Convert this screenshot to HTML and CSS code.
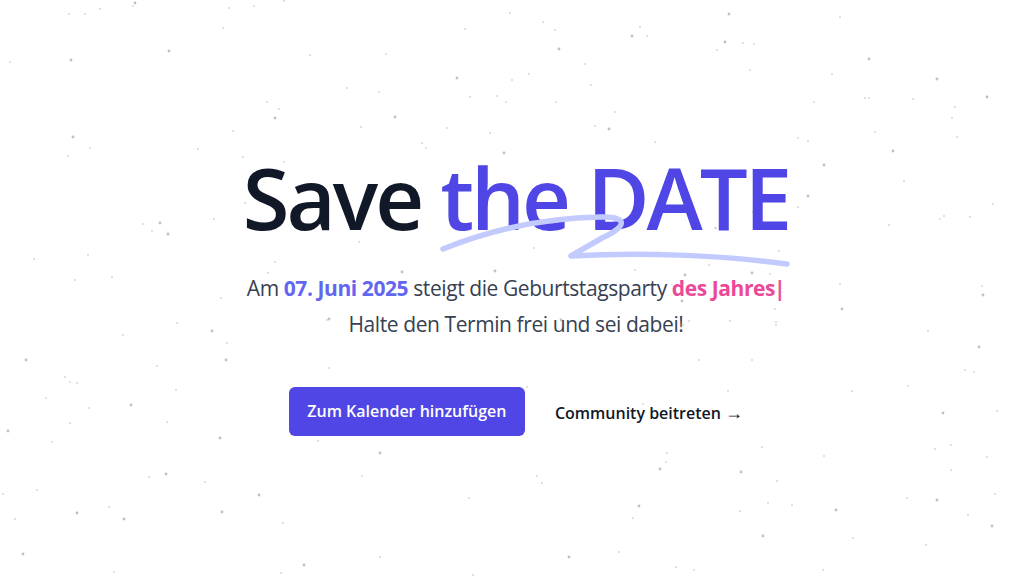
FILE: index.html
```html
<!DOCTYPE html>
<html lang="de">
<head>
<meta charset="utf-8">
<title>Save the DATE</title>
<link rel="stylesheet" href="styles.css">
</head>
<body>
<div class="page">
  <svg class="dots" viewBox="0 0 1024 576" width="1024" height="576" aria-hidden="true">
    <g class="big">
      <circle cx="169" cy="51" r="1.4"/><circle cx="71" cy="60" r="1.4"/><circle cx="73" cy="137" r="1.4"/><circle cx="135" cy="3" r="1.4"/>
      <circle cx="275" cy="118" r="1.4"/><circle cx="559" cy="49" r="1.4"/><circle cx="395" cy="117" r="1.4"/><circle cx="609" cy="129" r="1.4"/>
      <circle cx="504" cy="153" r="1.4"/><circle cx="632" cy="36" r="1.4"/><circle cx="457" cy="78" r="1.4"/><circle cx="725" cy="42" r="1.4"/>
      <circle cx="729" cy="14" r="1.4"/><circle cx="869" cy="59" r="1.4"/><circle cx="937" cy="79" r="1.4"/><circle cx="824" cy="165" r="1.4"/>
      <circle cx="893" cy="151" r="1.4"/><circle cx="987" cy="97" r="1.4"/><circle cx="160" cy="223" r="1.4"/><circle cx="168" cy="234" r="1.4"/>
      <circle cx="212" cy="331" r="1.4"/><circle cx="808" cy="196" r="1.4"/><circle cx="983" cy="295" r="1.4"/><circle cx="682" cy="301" r="1.4"/>
      <circle cx="979" cy="347" r="1.4"/><circle cx="842" cy="309" r="1.4"/><circle cx="26" cy="360" r="1.4"/><circle cx="226" cy="360" r="1.4"/>
      <circle cx="77" cy="513" r="1.4"/><circle cx="131" cy="405" r="1.4"/><circle cx="220" cy="438" r="1.4"/><circle cx="166" cy="474" r="1.4"/>
      <circle cx="222" cy="512" r="1.4"/><circle cx="124" cy="519" r="1.4"/><circle cx="380" cy="453" r="1.4"/><circle cx="259" cy="495" r="1.4"/>
      <circle cx="23" cy="554" r="1.4"/><circle cx="304" cy="565" r="1.4"/><circle cx="8" cy="431" r="1.4"/><circle cx="741" cy="472" r="1.4"/>
      <circle cx="836" cy="510" r="1.4"/><circle cx="763" cy="536" r="1.4"/><circle cx="992" cy="526" r="1.4"/><circle cx="937" cy="500" r="1.4"/>
      <circle cx="569" cy="557" r="1.4"/><circle cx="660" cy="469" r="1.4"/><circle cx="639" cy="506" r="1.4"/><circle cx="943" cy="413" r="1.4"/>
      <circle cx="329" cy="319" r="1.4"/><circle cx="402" cy="272" r="1.4"/><circle cx="495" cy="271" r="1.4"/><circle cx="561" cy="320" r="1.4"/>
      <circle cx="685" cy="275" r="1.4"/><circle cx="752" cy="273" r="1.4"/>
    </g>
    <g class="small">
      <circle cx="69" cy="14" r="1"/><circle cx="85" cy="14" r="1"/><circle cx="100" cy="9" r="1"/><circle cx="133" cy="6" r="1"/>
      <circle cx="10" cy="62" r="1"/><circle cx="223" cy="28" r="1"/><circle cx="229" cy="8" r="1"/><circle cx="254" cy="6" r="1"/>
      <circle cx="284" cy="1" r="1"/><circle cx="310" cy="55" r="1"/><circle cx="267" cy="102" r="1"/><circle cx="279" cy="109" r="1"/>
      <circle cx="233" cy="131" r="1"/><circle cx="90" cy="148" r="1"/><circle cx="68" cy="156" r="1"/><circle cx="198" cy="149" r="1"/>
      <circle cx="243" cy="157" r="1"/><circle cx="284" cy="162" r="1"/><circle cx="510" cy="13" r="1"/><circle cx="543" cy="22" r="1"/>
      <circle cx="555" cy="30" r="1"/><circle cx="465" cy="29" r="1"/><circle cx="386" cy="54" r="1"/><circle cx="640" cy="27" r="1"/>
      <circle cx="647" cy="36" r="1"/><circle cx="585" cy="64" r="1"/><circle cx="529" cy="74" r="1"/><circle cx="512" cy="80" r="1"/>
      <circle cx="347" cy="88" r="1"/><circle cx="379" cy="92" r="1"/><circle cx="470" cy="97" r="1"/><circle cx="497" cy="96" r="1"/>
      <circle cx="506" cy="102" r="1"/><circle cx="556" cy="102" r="1"/><circle cx="591" cy="85" r="1"/><circle cx="615" cy="112" r="1"/>
      <circle cx="361" cy="127" r="1"/><circle cx="447" cy="128" r="1"/><circle cx="490" cy="133" r="1"/><circle cx="595" cy="126" r="1"/>
      <circle cx="422" cy="143" r="1"/><circle cx="426" cy="148" r="1"/><circle cx="655" cy="142" r="1"/><circle cx="840" cy="17" r="1"/>
      <circle cx="743" cy="43" r="1"/><circle cx="754" cy="44" r="1"/><circle cx="717" cy="50" r="1"/><circle cx="750" cy="70" r="1"/>
      <circle cx="832" cy="74" r="1"/><circle cx="814" cy="102" r="1"/><circle cx="865" cy="98" r="1"/><circle cx="869" cy="98" r="1"/>
      <circle cx="913" cy="99" r="1"/><circle cx="955" cy="107" r="1"/><circle cx="952" cy="118" r="1"/><circle cx="875" cy="132" r="1"/>
      <circle cx="798" cy="138" r="1"/><circle cx="808" cy="141" r="1"/><circle cx="904" cy="181" r="1"/><circle cx="957" cy="137" r="1"/>
      <circle cx="245" cy="203" r="1"/><circle cx="214" cy="219" r="1"/><circle cx="143" cy="224" r="1"/><circle cx="152" cy="231" r="1"/>
      <circle cx="88" cy="255" r="1"/><circle cx="34" cy="259" r="1"/><circle cx="75" cy="280" r="1"/><circle cx="112" cy="277" r="1"/>
      <circle cx="275" cy="262" r="1"/><circle cx="268" cy="273" r="1"/><circle cx="221" cy="298" r="1"/><circle cx="177" cy="323" r="1"/>
      <circle cx="123" cy="335" r="1"/><circle cx="227" cy="343" r="1"/><circle cx="157" cy="366" r="1"/><circle cx="65" cy="377" r="1"/>
      <circle cx="329" cy="368" r="1"/><circle cx="798" cy="207" r="1"/><circle cx="753" cy="212" r="1"/><circle cx="716" cy="228" r="1"/>
      <circle cx="889" cy="225" r="1"/><circle cx="940" cy="219" r="1"/><circle cx="944" cy="216" r="1"/><circle cx="970" cy="217" r="1"/>
      <circle cx="993" cy="204" r="1"/><circle cx="779" cy="251" r="1"/><circle cx="709" cy="265" r="1"/><circle cx="840" cy="284" r="1"/>
      <circle cx="982" cy="286" r="1"/><circle cx="775" cy="309" r="1"/><circle cx="689" cy="321" r="1"/><circle cx="730" cy="321" r="1"/>
      <circle cx="776" cy="322" r="1"/><circle cx="928" cy="331" r="1"/><circle cx="699" cy="360" r="1"/><circle cx="752" cy="360" r="1"/>
      <circle cx="965" cy="370" r="1"/><circle cx="974" cy="372" r="1"/><circle cx="70" cy="382" r="1"/><circle cx="77" cy="383" r="1"/>
      <circle cx="46" cy="398" r="1"/><circle cx="89" cy="408" r="1"/><circle cx="176" cy="390" r="1"/><circle cx="70" cy="423" r="1"/>
      <circle cx="52" cy="442" r="1"/><circle cx="167" cy="422" r="1"/><circle cx="318" cy="441" r="1"/><circle cx="149" cy="477" r="1"/>
      <circle cx="205" cy="482" r="1"/><circle cx="362" cy="476" r="1"/><circle cx="37" cy="490" r="1"/><circle cx="3" cy="494" r="1"/>
      <circle cx="469" cy="498" r="1"/><circle cx="109" cy="507" r="1"/><circle cx="15" cy="519" r="1"/><circle cx="283" cy="523" r="1"/>
      <circle cx="380" cy="557" r="1"/><circle cx="114" cy="572" r="1"/><circle cx="281" cy="573" r="1"/><circle cx="473" cy="575" r="1"/>
      <circle cx="728" cy="391" r="1"/><circle cx="852" cy="391" r="1"/><circle cx="908" cy="386" r="1"/><circle cx="997" cy="411" r="1"/>
      <circle cx="643" cy="404" r="1"/><circle cx="762" cy="447" r="1"/><circle cx="824" cy="456" r="1"/><circle cx="935" cy="449" r="1"/>
      <circle cx="951" cy="445" r="1"/><circle cx="987" cy="457" r="1"/><circle cx="667" cy="453" r="1"/><circle cx="666" cy="462" r="1"/>
      <circle cx="777" cy="481" r="1"/><circle cx="537" cy="476" r="1"/><circle cx="542" cy="483" r="1"/><circle cx="951" cy="470" r="1"/>
      <circle cx="995" cy="494" r="1"/><circle cx="633" cy="518" r="1"/><circle cx="768" cy="503" r="1"/><circle cx="792" cy="505" r="1"/>
      <circle cx="968" cy="515" r="1"/><circle cx="853" cy="538" r="1"/><circle cx="926" cy="545" r="1"/><circle cx="619" cy="552" r="1"/>
      <circle cx="676" cy="567" r="1"/><circle cx="694" cy="570" r="1"/><circle cx="823" cy="570" r="1"/><circle cx="740" cy="511" r="1"/>
      <circle cx="907" cy="498" r="1"/><circle cx="534" cy="248" r="1"/><circle cx="359" cy="242" r="1"/><circle cx="715" cy="228" r="1"/>
      <circle cx="770" cy="274" r="1"/><circle cx="327" cy="320" r="1"/><circle cx="683" cy="325" r="1"/><circle cx="776" cy="325" r="1"/>
      <circle cx="520" cy="332" r="1"/><circle cx="635" cy="270" r="1"/><circle cx="527" cy="387" r="1"/>
    </g>
  </svg>

  <main class="hero">
    <h1 class="title">Save <span class="accent">the DATE</span></h1>
    <p class="lead">Am <strong class="date">07. Juni 2025</strong> steigt die Geburtstagsparty <strong class="hot">des Jahres<span class="caret">|</span></strong><br>Halte den Termin frei und sei dabei!</p>
    <div class="actions">
      <a class="btn-primary" href="#">Zum Kalender hinzufügen</a>
      <a class="btn-link" href="#">Community beitreten <span class="arrow" aria-hidden="true">→</span></a>
    </div>
  </main>

  <svg class="swoosh" viewBox="0 0 1024 576" width="1024" height="576" aria-hidden="true">
    <path d="M443 249 C 490 230, 545 218, 600 217 C 626 216, 630 225, 602 238 L 571 256 C 640 252, 720 255, 787 264" />
  </svg>
</div>
</body>
</html>
```
FILE: styles.css
```css
* { box-sizing: border-box; }
html, body { margin: 0; padding: 0; background: #ffffff; }
body { font-family: "Open Sans", "Noto Sans", Arial, sans-serif; color: #111827; }

.page {
  position: relative;
  width: 1024px;
  height: 576px;
  overflow: hidden;
}

.dots {
  position: absolute;
  left: 0;
  top: 0;
  z-index: 0;
}
.dots .big circle { fill: #a9a9b1; opacity: 0.75; }
.dots .small circle { fill: #bdbdc5; opacity: 0.6; }

.swoosh {
  position: absolute;
  left: 0;
  top: 0;
  z-index: 2;
  pointer-events: none;
}
.swoosh path {
  fill: none;
  stroke: #c3cafd;
  stroke-width: 5.5;
  stroke-linecap: round;
  stroke-linejoin: round;
}

.hero {
  position: relative;
  z-index: 1;
  display: flex;
  flex-direction: column;
  align-items: center;
  padding: 155px 0 0 8px;
  text-align: center;
}

.title {
  margin: 0;
  font-size: 85px;
  line-height: 1;
  font-weight: 600;
  letter-spacing: -0.035em;
  color: #111827;
}
.title .accent { color: #4f46e5; }

.lead {
  margin: 30px 0 0;
  font-size: 21px;
  line-height: 36px;
  color: #374151;
  letter-spacing: -0.02em;
}
.lead .date { color: #6366f1; font-weight: 700; }
.lead .hot { color: #ec4899; font-weight: 700; }
.lead .caret { font-weight: 700; margin-left: -1px; }

.actions {
  margin-top: 45px;
  display: flex;
  align-items: center;
  gap: 30px;
}

.btn-primary {
  display: block;
  width: 236px;
  height: 49px;
  line-height: 49px;
  border-radius: 6px;
  background: #4f46e5;
  color: #ffffff;
  font-size: 16px;
  font-weight: 600;
  text-decoration: none;
}

.btn-link {
  display: block;
  color: #111827;
  font-size: 16px;
  font-weight: 600;
  text-decoration: none;
}
.btn-link .arrow { font-size: 18px; font-weight: 400; }
```
